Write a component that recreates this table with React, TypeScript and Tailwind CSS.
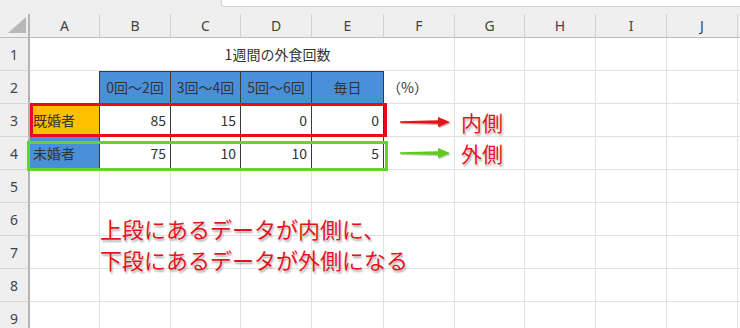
import React from "react";

type CellSpec = {
  text?: string;
  align?: "left" | "center" | "right";
  bg?: string;
  darkR?: boolean;
  darkB?: boolean;
  darkT?: boolean;
  noR?: boolean;
  span?: number;
};

const LETTERS = ["A", "B", "C", "D", "E", "F", "G", "H", "I", "J"];

const empty = (n: number): CellSpec[] => Array.from({ length: n }, () => ({}));

const rows: CellSpec[][] = [
  [
    { noR: true },
    { text: "1週間の外食回数", align: "center", span: 5 },
    ...empty(4),
  ],
  [
    { darkR: true },
    { text: "0回～2回", align: "center", bg: "blue", darkR: true, darkB: true, darkT: true },
    { text: "3回～4回", align: "center", bg: "blue", darkR: true, darkB: true, darkT: true },
    { text: "5回～6回", align: "center", bg: "blue", darkR: true, darkB: true, darkT: true },
    { text: "毎日", align: "center", bg: "blue", darkR: true, darkB: true, darkT: true },
    { text: "（%）", align: "left" },
    ...empty(4),
  ],
  [
    { text: "既婚者", align: "left", bg: "orange", darkR: true },
    { text: "85", align: "right", darkR: true },
    { text: "15", align: "right", darkR: true },
    { text: "0", align: "right", darkR: true },
    { text: "0", align: "right", darkR: true },
    ...empty(5),
  ],
  [
    { text: "未婚者", align: "left", bg: "blue", darkR: true },
    { text: "75", align: "right", darkR: true },
    { text: "10", align: "right", darkR: true },
    { text: "10", align: "right", darkR: true },
    { text: "5", align: "right", darkR: true },
    ...empty(5),
  ],
  empty(10),
  empty(10),
  empty(10),
  empty(10),
  empty(10),
];

function Cell({ c }: { c: CellSpec }) {
  const bg =
    c.bg === "blue" ? "bg-[#4a90d9]" : c.bg === "orange" ? "bg-[#ffc000]" : "bg-white";
  const right = c.noR ? "border-r-0" : c.darkR ? "border-r border-r-[#3a3a3a]" : "border-r border-r-[#e1e1e1]";
  const bottom = c.darkB ? "border-b border-b-[#3a3a3a]" : "border-b border-b-[#e1e1e1]";
  const top = c.darkT ? "shadow-[inset_0_1px_0_#3a3a3a]" : "";
  const justify =
    c.align === "right" ? "justify-end pr-[4px]" : c.align === "center" ? "justify-center" : "justify-start pl-[3px]";
  const span = c.span === 5 ? "col-span-5 pl-[1px]" : "";
  return (
    <div
      className={`flex items-center ${justify} ${bg} ${right} ${bottom} ${top} ${span} text-[14px] text-[#333] leading-none whitespace-nowrap`}
    >
      {c.text}
    </div>
  );
}

function Arrow({ color, shade }: { color: string; shade: string }) {
  return (
    <svg width="58" height="18" viewBox="0 0 58 18">
      <polygon points="2,8.3 40,7.2 40,4 52,9 40,14 40,10.8 2,9.7" fill={shade} opacity="0.35" transform="translate(1,1.2)" />
      <polygon points="2,8.3 40,7.2 40,4 52,9 40,14 40,10.8 2,9.7" fill={color} />
    </svg>
  );
}

const redText =
  "text-[#e3141c] whitespace-nowrap [text-shadow:0_0_2px_#fff,1px_2px_2px_rgba(0,0,0,0.35)]";

export default function App() {
  return (
    <div className="relative w-[740px] h-[328px] overflow-hidden bg-white font-['Noto_Sans_CJK_JP','Noto_Sans',sans-serif] select-none">
      {/* strip above the column headers */}
      <div className="flex h-[14px] bg-[#efefef]">
        <div className="ml-[221px] flex-1 h-[7px] bg-white border border-t-0 border-r-0 border-[#d4d4d4] rounded-bl-[4px]" />
      </div>

      <div className="grid grid-cols-[30px_70px_71px_70px_71px_72px_71px_70px_71px_71px_71px_2px] grid-rows-[24px_repeat(9,33px)]">
        {/* column headers */}
        <div className="flex items-end justify-end pr-[1px] pb-[3px] bg-[#efefef] border-r-2 border-r-[#b4b4b4] border-b border-b-[#bdbdbd]">
          <svg width="19" height="17" viewBox="0 0 19 17">
            <polygon points="18,0 18,16 0,16" fill="#b8b8b8" />
          </svg>
        </div>
        {LETTERS.map((l) => (
          <div
            key={l}
            className="flex items-center justify-center bg-[#efefef] border-r border-r-[#d2d2d2] border-b border-b-[#bdbdbd] text-[14px] text-[#444] font-['Noto_Sans',sans-serif] leading-none"
          >
            {l}
          </div>
        ))}
        <div className="bg-[#efefef] border-b border-b-[#bdbdbd]" />

        {rows.map((r, i) => (
          <React.Fragment key={i}>
            <div className="flex items-center justify-center bg-[#efefef] border-r-2 border-r-[#b4b4b4] border-b border-b-[#d6d6d6] text-[14px] text-[#444] font-['Noto_Sans',sans-serif] leading-none pt-[2px]">
              {i + 1}
            </div>
            {r.map((c, j) => (
              <Cell key={j} c={c} />
            ))}
            <div className="border-b border-b-[#e1e1e1]" />
          </React.Fragment>
        ))}
      </div>

      {/* highlight frames */}
      <div className="absolute left-[30px] top-[103px] w-[357px] h-[34px] border-[3px] border-[#e60d19]" />
      <div className="absolute left-[27px] top-[141px] w-[361px] h-[30px] border-[3px] border-[#5ed62a]" />

      {/* callouts: arrows with their labels */}
      <div className="absolute left-[398px] top-[106px] flex flex-col">
        <div className="flex items-center h-[31px] gap-[5px]">
          <Arrow color="#e3141c" shade="#7a0000" />
          <span className={`${redText} text-[21px] leading-[28px]`}>内側</span>
        </div>
        <div className="flex items-center h-[31px] gap-[5px]">
          <Arrow color="#5ccb1e" shade="#2a6a00" />
          <span className={`${redText} text-[21px] leading-[28px]`}>外側</span>
        </div>
      </div>

      <div className={`absolute left-[100px] top-[213px] text-[22px] leading-[31px] ${redText}`}>
        <div>上段にあるデータが内側に、</div>
        <div>下段にあるデータが外側になる</div>
      </div>
    </div>
  );
}
